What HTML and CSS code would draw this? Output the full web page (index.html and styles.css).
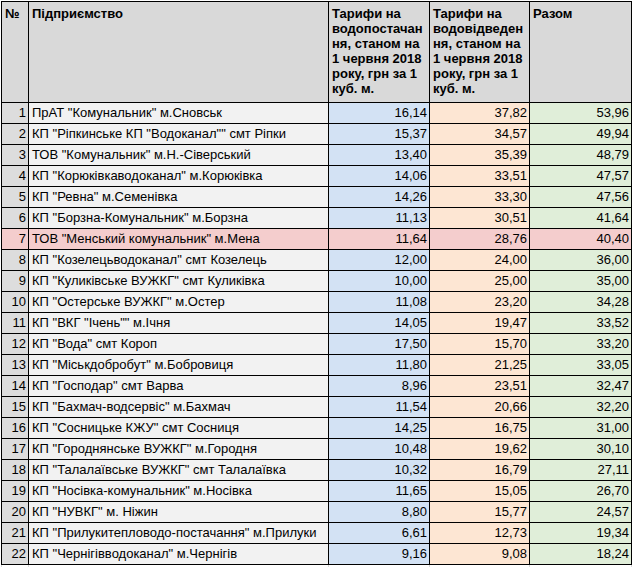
FILE: index.html
```html
<!DOCTYPE html>
<html lang="uk">
<head>
<meta charset="utf-8">
<title>Тарифи</title>
<link rel="stylesheet" href="styles.css">
</head>
<body>
<div class="sheet">
  <div class="hd">№</div>
  <div class="hd">Підприємство</div>
  <div class="hd">Тарифи на<br>водопостачан<br>ня, станом на<br>1 червня 2018<br>року, грн за 1<br>куб. м.</div>
  <div class="hd">Тарифи на<br>водовідведен<br>ня, станом на<br>1 червня 2018<br>року, грн за 1<br>куб. м.</div>
  <div class="hd">Разом</div>

  <div class="n">1</div><div class="c">ПрАТ "Комунальник" м.Сновськ</div><div class="v b">16,14</div><div class="v o">37,82</div><div class="v g">53,96</div>
  <div class="n">2</div><div class="c">КП "Ріпкинське КП "Водоканал"" смт Ріпки</div><div class="v b">15,37</div><div class="v o">34,57</div><div class="v g">49,94</div>
  <div class="n">3</div><div class="c">ТОВ "Комунальник" м.Н.-Сіверський</div><div class="v b">13,40</div><div class="v o">35,39</div><div class="v g">48,79</div>
  <div class="n">4</div><div class="c">КП "Корюківкаводоканал" м.Корюківка</div><div class="v b">14,06</div><div class="v o">33,51</div><div class="v g">47,57</div>
  <div class="n">5</div><div class="c">КП "Ревна" м.Семенівка</div><div class="v b">14,26</div><div class="v o">33,30</div><div class="v g">47,56</div>
  <div class="n">6</div><div class="c">КП "Борзна-Комунальник" м.Борзна</div><div class="v b">11,13</div><div class="v o">30,51</div><div class="v g">41,64</div>
  <div class="n p">7</div><div class="c p">ТОВ "Менський комунальник" м.Мена</div><div class="v p">11,64</div><div class="v p">28,76</div><div class="v p">40,40</div>
  <div class="n">8</div><div class="c">КП "Козелецьводоканал" смт Козелець</div><div class="v b">12,00</div><div class="v o">24,00</div><div class="v g">36,00</div>
  <div class="n">9</div><div class="c">КП "Куликівське ВУЖКГ" смт Куликівка</div><div class="v b">10,00</div><div class="v o">25,00</div><div class="v g">35,00</div>
  <div class="n">10</div><div class="c">КП "Остерське ВУЖКГ" м.Остер</div><div class="v b">11,08</div><div class="v o">23,20</div><div class="v g">34,28</div>
  <div class="n">11</div><div class="c">КП "ВКГ "Ічень"" м.Ічня</div><div class="v b">14,05</div><div class="v o">19,47</div><div class="v g">33,52</div>
  <div class="n">12</div><div class="c">КП "Вода" смт Короп</div><div class="v b">17,50</div><div class="v o">15,70</div><div class="v g">33,20</div>
  <div class="n">13</div><div class="c">КП "Міськдобробут" м.Бобровиця</div><div class="v b">11,80</div><div class="v o">21,25</div><div class="v g">33,05</div>
  <div class="n">14</div><div class="c">КП "Господар" смт Варва</div><div class="v b">8,96</div><div class="v o">23,51</div><div class="v g">32,47</div>
  <div class="n">15</div><div class="c">КП "Бахмач-водсервіс" м.Бахмач</div><div class="v b">11,54</div><div class="v o">20,66</div><div class="v g">32,20</div>
  <div class="n">16</div><div class="c">КП "Сосницьке КЖУ" смт Сосниця</div><div class="v b">14,25</div><div class="v o">16,75</div><div class="v g">31,00</div>
  <div class="n">17</div><div class="c">КП "Городнянське ВУЖКГ" м.Городня</div><div class="v b">10,48</div><div class="v o">19,62</div><div class="v g">30,10</div>
  <div class="n">18</div><div class="c">КП "Талалаївське ВУЖКГ" смт Талалаївка</div><div class="v b">10,32</div><div class="v o">16,79</div><div class="v g">27,11</div>
  <div class="n">19</div><div class="c">КП "Носівка-комунальник" м.Носівка</div><div class="v b">11,65</div><div class="v o">15,05</div><div class="v g">26,70</div>
  <div class="n">20</div><div class="c">КП "НУВКГ" м. Ніжин</div><div class="v b">8,80</div><div class="v o">15,77</div><div class="v g">24,57</div>
  <div class="n">21</div><div class="c">КП "Прилукитепловодо-постачання" м.Прилуки</div><div class="v b">6,61</div><div class="v o">12,73</div><div class="v g">19,34</div>
  <div class="n">22</div><div class="c">КП "Чернігівводоканал" м.Чернігів</div><div class="v b">9,16</div><div class="v o">9,08</div><div class="v g">18,24</div>
</div>
<div class="ghost">
  <div></div><div></div><div></div><div></div><div></div>
</div>
</body>
</html>
```

FILE: styles.css
```css
html, body {
  margin: 0;
  padding: 0;
  background: #ffffff;
}

body {
  padding: 1px 0 0 1px;
  font-family: "Liberation Sans", Arial, sans-serif;
  font-size: 13px;
  color: #000000;
}

.sheet {
  display: grid;
  grid-template-columns: 26px 299px 100px 99px 101px;
  grid-template-rows: 100px;
  grid-auto-rows: 20px;
  gap: 1px;
  width: max-content;
  background: #000000;
  border: 1px solid #000000;
}

.sheet > div {
  line-height: 20px;
  white-space: nowrap;
  overflow: hidden;
}

.hd {
  background: #d9d9d9;
  font-weight: bold;
  line-height: 15px !important;
  padding: 4px 3px 0 3px;
}

.n {
  background: #dddddd;
  text-align: right;
  padding-right: 2px;
}

.c {
  background: #f2f2f2;
  padding-left: 3px;
}

.v {
  text-align: right;
  padding-right: 2px;
}

.b { background: #d3e2f4; }
.o { background: #fde6d3; }
.g { background: #e0eed9; }
.sheet > .p { background: #f4cdcd; }

.ghost {
  display: grid;
  grid-template-columns: 26px 299px 100px 99px 101px;
  grid-auto-rows: 20px;
  column-gap: 1px;
  width: max-content;
  background: #dadada;
  padding: 0 1px;
}

.ghost > div {
  background: #ffffff;
}
```
